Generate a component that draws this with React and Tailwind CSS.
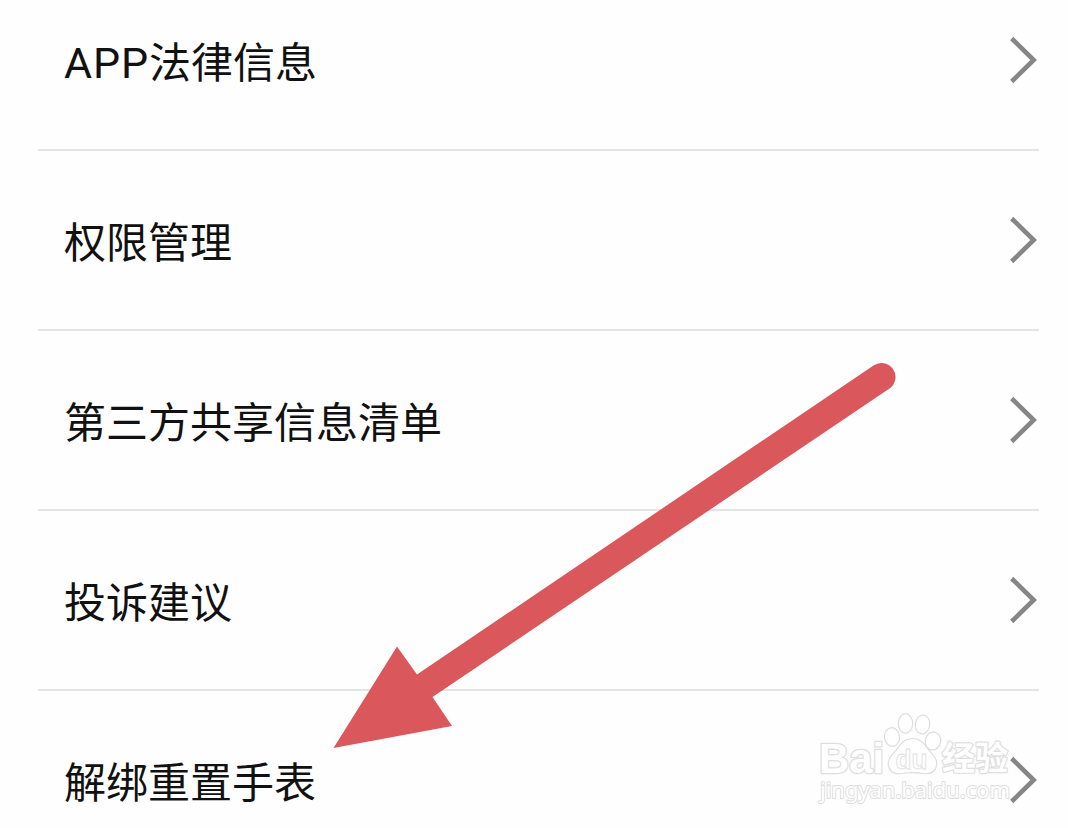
const items = ['APP法律信息', '权限管理', '第三方共享信息清单', '投诉建议', '解绑重置手表']

const Chevron = () => (
  <svg width="30" height="48" viewBox="0 0 30 48" fill="none" stroke="#868686" strokeWidth="4.6" className="shrink-0">
    <path d="M2.7 2.5 L24.7 24 L2.7 45.5" />
  </svg>
)

const Arrow = () => (
  <svg width="580" height="400" viewBox="325 355 580 400" className="absolute left-[325px] top-[355px]">
    <path
      d="M333.5 748 L397 646.5 L417 674.5 L873.5 365.5 A14 14 0 0 1 889.5 388.5 L432.5 697 L452 726 Z"
      fill="#da575b"
    />
  </svg>
)

const Watermark = () => (
  <svg
    width="210"
    height="100"
    viewBox="810 708 210 100"
    fill="#ffffff"
    stroke="#dedede"
    strokeWidth="1.2"
    strokeLinejoin="round"
    className="absolute left-[810px] top-[708px]"
  >
    <text
      x="819"
      y="773"
      fontSize="43"
      textLength="65"
      lengthAdjust="spacingAndGlyphs"
      strokeWidth="2.6"
      className="font-['Liberation_Sans',sans-serif] font-bold [paint-order:stroke]"
    >
      Bai
    </text>
    <ellipse cx="892" cy="737" rx="7.5" ry="9.3" transform="rotate(-8 892 737)" />
    <ellipse cx="905.5" cy="723.5" rx="7.2" ry="9.8" />
    <ellipse cx="922.5" cy="724.5" rx="7.2" ry="9.5" transform="rotate(8 922.5 724.5)" />
    <ellipse cx="933" cy="741" rx="7.7" ry="9" transform="rotate(10 933 741)" />
    <path d="M912.5 738.5 C905 738.5 901 743 897 749 C892 755 887 759 888.5 766 C890 773 896 774.5 902 773.5 C908 772.5 917 772.5 923 773.5 C930 774.5 935 772 936.5 766 C938 759 933 755 928 749 C924 743 920 738.5 912.5 738.5 Z" />
    <text
      x="895.5"
      y="768.5"
      fontSize="27"
      textLength="32"
      lengthAdjust="spacingAndGlyphs"
      strokeWidth="0.9"
      className="font-['Liberation_Sans',sans-serif] font-bold"
    >
      du
    </text>
    <text
      x="942"
      y="770"
      fontSize="33"
      textLength="66"
      strokeWidth="2.4"
      className="font-['Noto_Sans_CJK_SC',sans-serif] font-bold [paint-order:stroke]"
    >
      经验
    </text>
    <text
      x="820"
      y="798"
      fontSize="22"
      textLength="190"
      lengthAdjust="spacingAndGlyphs"
      strokeWidth="2"
      className="font-['Noto_Sans',sans-serif] [paint-order:stroke]"
    >
      jingyan.baidu.com
    </text>
  </svg>
)

const App = () => {
  return (
    <div className="relative w-[1068px] h-[828px] overflow-hidden bg-[#fefefe] font-['Noto_Sans_CJK_SC',sans-serif] text-[#111111]">
      {/* Settings list, first row is scrolled partly out of view */}
      <ul className="-mt-[29px] ml-[38px] w-[1001px]">
        {items.map((item) => (
          <li key={item} className="h-[180px] flex items-center justify-between pl-[26px] border-b-2 border-[#e4e4e4]">
            <span className="text-[42px] leading-[60px] whitespace-nowrap">
              {item.startsWith('APP') ? (
                <>
                  <span className="font-['Roboto',sans-serif] text-[43px] leading-none tracking-[0.9px]">APP</span>
                  {item.slice(3)}
                </>
              ) : (
                item
              )}
            </span>
            <Chevron />
          </li>
        ))}
      </ul>

      <Arrow />
      <Watermark />
    </div>
  )
}

export default App
